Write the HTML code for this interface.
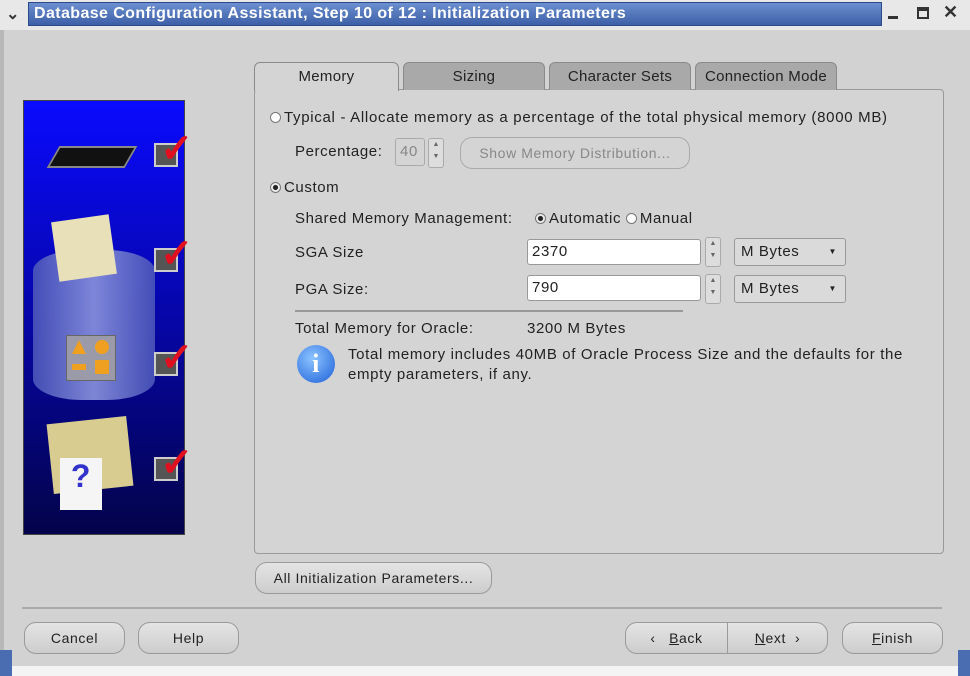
<!DOCTYPE html>
<html><head><style>
*{box-sizing:border-box}
body{margin:0;width:970px;height:676px;background:#d2d2d2;font-family:"Liberation Sans",sans-serif;font-size:15px;letter-spacing:0.6px;color:#222;position:relative;overflow:hidden}
.a{position:absolute;white-space:nowrap}
.btn{position:absolute;border:1px solid #9a9a9a;border-radius:12px;background:linear-gradient(#e4e4e4,#cdcdcd);text-align:center;line-height:30px;font-size:14px;color:#222}
.tab{position:absolute;top:62px;height:28px;border:1px solid #8a8a8a;border-bottom:none;border-radius:6px 6px 0 0;background:#a9a9a9;text-align:center;line-height:28px;font-size:15px;color:#222;letter-spacing:0.3px}
.inp{position:absolute;background:#fff;border:1px solid #999;border-radius:3px;padding-left:4px;line-height:24px;font-size:15px}
.radio{display:inline-block;width:11px;height:11px;border:1px solid #777;border-radius:50%;background:#fff;vertical-align:-1px;margin-right:3px}
.on{background:radial-gradient(#222 35%,#eee 45%)}
.spin{position:absolute;width:16px;border:1px solid #aaa;border-radius:3px;background:#ddd;font-size:7px;text-align:center;color:#666;line-height:12px;letter-spacing:0}
.sel{position:absolute;border:1px solid #999;border-radius:3px;background:#dadada;padding-left:6px;line-height:26px;font-size:15px}
.chk{position:absolute;width:24px;height:24px;border:2px solid #ccc;background:#555}
.ck{position:absolute;color:#e01020;font-size:40px;font-weight:bold;letter-spacing:0}
</style></head><body>
<div class="a" style="left:0;top:0;width:970px;height:30px;background:#e8e8e8"></div>
<div class="a" style="left:28px;top:2px;width:854px;height:24px;background:linear-gradient(#6b8fd0,#3d5fa8);border:1px solid #2a4a8a"></div>
<div class="a" style="left:6px;top:4px;font-size:16px;font-weight:bold;color:#333">&#8964;</div>
<div class="a" style="left:34px;top:5px;color:#fff;font-size:16px;font-weight:bold;letter-spacing:0.4px">Database Configuration Assistant, Step 10 of 12 : Initialization Parameters</div>
<div class="a" style="left:888px;top:16px;width:10px;height:3px;background:#333"></div>
<div class="a" style="left:917px;top:7px;width:12px;height:12px;border:2px solid #333;border-top-width:4px"></div>
<div class="a" style="left:943px;top:2px;font-size:18px;font-weight:bold;color:#333">✕</div>
<div class="a" style="left:0;top:30px;width:4px;height:646px;background:#b8b8b8"></div>

<div class="a" style="left:23px;top:100px;width:162px;height:435px;background:linear-gradient(#0a0aff,#0606a8 50%,#03034a);border:1px solid #444"></div>
<div class="a" style="left:53px;top:146px;width:78px;height:22px;background:#111;transform:skewX(-30deg);border:2px solid #888"></div>
<div class="a" style="left:33px;top:250px;width:122px;height:150px;border-radius:40%/14%;background:linear-gradient(90deg,#4a55b8,#8a94dd 50%,#4a55b8);opacity:.9"></div>
<div class="a" style="left:55px;top:218px;width:58px;height:60px;background:#e8e0b8;transform:rotate(-8deg)"></div>
<div class="a" style="left:66px;top:335px;width:50px;height:46px;background:#9a9aa8;border:1px solid #666"></div>
<div class="a" style="left:72px;top:340px;width:14px;height:14px;background:#f0a020;clip-path:polygon(50% 0,100% 100%,0 100%)"></div>
<div class="a" style="left:95px;top:340px;width:14px;height:14px;background:#f0a020;border-radius:50%"></div>
<div class="a" style="left:72px;top:364px;width:14px;height:6px;background:#f0a020"></div>
<div class="a" style="left:95px;top:360px;width:14px;height:14px;background:#f0a020"></div>
<div class="a" style="left:50px;top:420px;width:80px;height:70px;background:#d8cc90;transform:rotate(-6deg)"></div>
<div class="a" style="left:60px;top:458px;width:42px;height:52px;background:#f5f5f5;color:#33c;font-size:32px;text-align:center;font-weight:bold">?</div>
<div class="chk" style="left:154px;top:143px"></div>
<div class="chk" style="left:154px;top:248px"></div>
<div class="chk" style="left:154px;top:352px"></div>
<div class="chk" style="left:154px;top:457px"></div>
<div class="ck" style="left:160px;top:126px">✓</div>
<div class="ck" style="left:160px;top:231px">✓</div>
<div class="ck" style="left:160px;top:335px">✓</div>
<div class="ck" style="left:160px;top:440px">✓</div>

<div class="a" style="left:254px;top:89px;width:690px;height:465px;border:1px solid #999;border-radius:4px;background:#d4d4d4"></div>
<div class="tab" style="left:254px;width:145px;height:29px;background:#d4d4d4;z-index:2">Memory</div>
<div class="tab" style="left:403px;width:142px">Sizing</div>
<div class="tab" style="left:549px;width:142px">Character Sets</div>
<div class="tab" style="left:695px;width:142px">Connection Mode</div>

<div class="a" style="left:270px;top:109px;letter-spacing:0.7px"><span class="radio"></span>Typical - Allocate memory as a percentage of the total physical memory (8000 MB)</div>
<div class="a" style="left:295px;top:143px">Percentage:</div>
<div class="a" style="left:395px;top:138px;width:30px;height:28px;border:1px solid #aaa;border-radius:3px;color:#888;line-height:26px;padding-left:4px">40</div>
<div class="spin" style="left:428px;top:138px;height:30px">▲<br>▼</div>
<div class="btn" style="left:460px;top:137px;width:230px;color:#888;border-color:#aaa;background:#d4d4d4">Show Memory Distribution...</div>
<div class="a" style="left:270px;top:179px"><span class="radio on"></span>Custom</div>
<div class="a" style="left:295px;top:210px">Shared Memory Management:</div>
<div class="a" style="left:535px;top:210px"><span class="radio on"></span>Automatic <span class="radio"></span>Manual</div>
<div class="a" style="left:295px;top:244px">SGA Size</div>
<div class="inp" style="left:527px;top:239px;width:174px;height:26px">2370</div>
<div class="spin" style="left:705px;top:237px;height:30px">▲<br>▼</div>
<div class="sel" style="left:734px;top:238px;width:112px;height:28px">M Bytes<span style="position:absolute;right:8px;font-size:8px">▼</span></div>
<div class="a" style="left:295px;top:281px">PGA Size:</div>
<div class="inp" style="left:527px;top:275px;width:174px;height:26px">790</div>
<div class="spin" style="left:705px;top:274px;height:30px">▲<br>▼</div>
<div class="sel" style="left:734px;top:275px;width:112px;height:28px">M Bytes<span style="position:absolute;right:8px;font-size:8px">▼</span></div>
<div class="a" style="left:295px;top:310px;width:388px;height:2px;background:#999"></div>
<div class="a" style="left:295px;top:320px">Total Memory for Oracle:</div>
<div class="a" style="left:527px;top:320px">3200 M Bytes</div>
<div class="a" style="left:297px;top:345px;width:38px;height:38px;border-radius:50%;background:radial-gradient(circle at 40% 35%,#8cc4ff,#1c5fd8);color:#fff;font-weight:bold;font-family:'Liberation Serif',serif;font-size:26px;text-align:center;line-height:38px">i</div>
<div class="a" style="left:348px;top:345px;width:575px;line-height:20px;white-space:normal;letter-spacing:0.65px">Total memory includes 40MB of Oracle Process Size and the defaults for the empty parameters, if any.</div>

<div class="btn" style="left:255px;top:562px;width:237px">All Initialization Parameters...</div>
<div class="a" style="left:22px;top:607px;width:920px;height:2px;background:#aaa"></div>
<div class="btn" style="left:24px;top:622px;width:101px">Cancel</div>
<div class="btn" style="left:138px;top:622px;width:101px">Help</div>
<div class="btn" style="left:625px;top:622px;width:103px;border-radius:12px 0 0 12px">&lsaquo;&nbsp;&nbsp; <u>B</u>ack</div>
<div class="btn" style="left:727px;top:622px;width:101px;border-radius:0 12px 12px 0"><u>N</u>ext &nbsp;&rsaquo;</div>
<div class="btn" style="left:842px;top:622px;width:101px"><u>F</u>inish</div>
<div class="a" style="left:0;top:650px;width:12px;height:26px;background:#4a6cb0"></div>
<div class="a" style="left:958px;top:650px;width:12px;height:26px;background:#4a6cb0"></div>
<div class="a" style="left:12px;top:666px;width:946px;height:10px;background:#f4f4f4"></div>
</body></html>
